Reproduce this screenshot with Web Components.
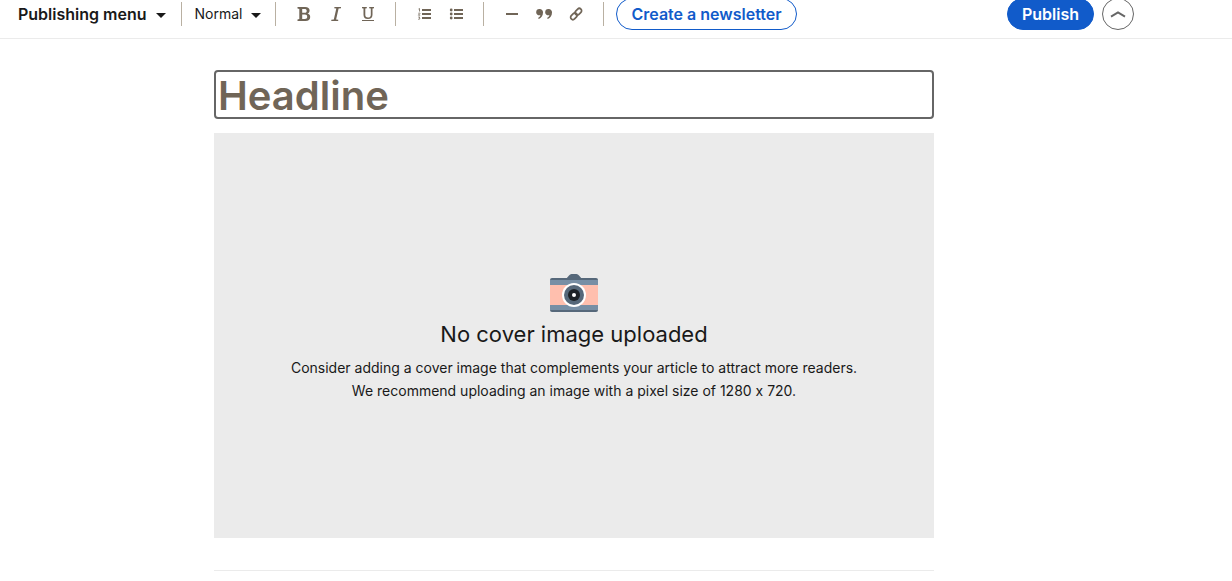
<!DOCTYPE html>
<html lang="en">
<head>
<meta charset="utf-8">
<title>Publish an article</title>
<style>
  body { margin: 0; background: #fff; color: #191919; font: 14px/20px Inter, "Liberation Sans", sans-serif; font-feature-settings: "calt" 0; }
</style>
</head>
<body>
<article-editor></article-editor>

<template id="tool-button">
  <style>
    :host { display: block; }
    button { display: grid; place-items: center; width: 32px; height: 32px; padding: 0; border: 0; background: none; color: #706557; }
    svg { display: block; width: 16px; height: 16px; }
  </style>
  <button type="button"></button>
</template>

<template id="menu-button">
  <style>
    :host { display: block; }
    button { display: flex; align-items: center; gap: 8px; padding: 0; border: 0; background: none; color: #191919; font: 14px/20px Inter, "Liberation Sans", sans-serif; white-space: nowrap; }
    :host([strong]) button { font-size: 16px; font-weight: 600; }
    svg { display: block; width: 12px; height: 12px; padding-top: 2px; }
  </style>
  <button type="button" aria-haspopup="true"><slot></slot><svg viewBox="0 0 12 12" aria-hidden="true"><path d="M1 4h10L6 9z" fill="currentColor"/></svg></button>
</template>

<template id="pill-button">
  <style>
    :host { display: block; }
    button { box-sizing: border-box; height: 32px; padding: 0 14px; border: 1px solid #115bca; border-radius: 16px; background: #fff; color: #115bca; font: 600 16px/20px Inter, "Liberation Sans", sans-serif; white-space: nowrap; }
    :host([primary]) button { background: #115bca; color: #fff; }
    :host([round]) button { display: grid; place-items: center; width: 32px; padding: 0; border-color: #666; color: #666; }
  </style>
  <button type="button"><slot></slot></button>
</template>

<template id="editor-toolbar">
  <style>
    :host { display: block; border-bottom: 1px solid #ebebeb; padding: 0 98px 10px 18px; }
    .bar { display: flex; align-items: center; height: 28px; }
    .rule { width: 1px; height: 24px; background: #b9b0a2; }
    .group { display: flex; padding: 0 11px 0 12px; }
    .menu { margin-right: 14px; }
    .style { margin: 0 13px; }
    .news { margin-left: 12px; }
    .end { display: flex; gap: 8px; margin-left: auto; }
  </style>
  <div class="bar" role="toolbar" aria-label="Formatting">
    <menu-button class="menu" strong>Publishing menu</menu-button>
    <span class="rule"></span>
    <menu-button class="style">Normal</menu-button>
    <span class="rule"></span>
    <div class="group">
      <tool-button icon="bold" label="Bold"></tool-button>
      <tool-button icon="italic" label="Italic"></tool-button>
      <tool-button icon="underline" label="Underline"></tool-button>
    </div>
    <span class="rule"></span>
    <div class="group">
      <tool-button icon="ordered" label="Ordered list"></tool-button>
      <tool-button icon="bullets" label="Unordered list"></tool-button>
    </div>
    <span class="rule"></span>
    <div class="group">
      <tool-button icon="divider" label="Divider"></tool-button>
      <tool-button icon="quote" label="Quote"></tool-button>
      <tool-button icon="link" label="Link"></tool-button>
    </div>
    <span class="rule"></span>
    <pill-button class="news">Create a newsletter</pill-button>
    <div class="end">
      <pill-button primary>Publish</pill-button>
      <pill-button round label="Collapse toolbar"><svg width="16" height="16" viewBox="0 0 16 16" aria-hidden="true"><path d="M1 10.600 8 6.400l7 4.200" fill="none" stroke="currentColor" stroke-width="2"/></svg></pill-button>
    </div>
  </div>
</template>

<template id="cover-placeholder">
  <style>
    :host { display: flex; flex-direction: column; align-items: center; justify-content: center; box-sizing: border-box; aspect-ratio: 16 / 9; padding-top: 3px; background: #ebebeb; text-align: center; }
    svg { display: block; width: 48px; height: 40px; }
    h2 { margin: 7px 0 8px; font-size: 22px; line-height: 28px; font-weight: 400; }
    p { margin: 0; font-size: 14px; line-height: 23px; }
  </style>
  <svg viewBox="0 0 48 40" aria-hidden="true">
    <path d="M16 6l3-3.500Q20 1 21.500 1h5Q28 1 29 2.500L32 6z" fill="#56687a"/>
    <path d="M0 7q0-2 2-2h44q2 0 2 2v30q0 2-2 2H2q-2 0-2-2z" fill="#56687a"/>
    <path d="M0 7h48v5H0zM0 32h48v5H0z" fill="#788fa5"/>
    <path d="M0 12h48v20H0z" fill="#ffbfae"/>
    <circle cx="24" cy="22" r="12" fill="#fff"/>
    <circle cx="24" cy="22" r="10" fill="#56687a"/>
    <circle cx="24" cy="22" r="6" fill="#1d2226"/>
    <circle cx="24" cy="22" r="2" fill="#fff"/>
  </svg>
  <h2>No cover image uploaded</h2>
  <p>Consider adding a cover image that complements your article to attract more readers.<br>We recommend uploading an image with a pixel size of 1280 x 720.</p>
</template>

<template id="article-editor">
  <style>
    :host { display: block; }
    main { box-sizing: border-box; width: 100%; padding: 31px 84px 0 0; }
    .column { max-width: 720px; margin: 0 auto; }
    input { display: block; box-sizing: border-box; width: 100%; height: 49px; margin: 0 0 14px; padding: 2px 2px 0; border: 2px solid #666; border-radius: 4px; outline: 0; background: #fff; color: #191919; font: 600 40px/43px Inter, "Liberation Sans", sans-serif; }
    input::placeholder { color: #706557; opacity: 1; }
    hr { margin: 32px 0 0; border: 0; border-top: 1px solid #ebebeb; }
  </style>
  <editor-toolbar></editor-toolbar>
  <main>
    <div class="column">
      <input type="text" placeholder="Headline" aria-label="Headline">
      <cover-placeholder></cover-placeholder>
      <hr>
    </div>
  </main>
</template>

<script>
const icons = {
  bold: '<path d="M1.500 1h7.700c2.800 0 4.400 1.300 4.400 3.500 0 1.600-.8 2.600-2.200 3.100 1.800.4 2.800 1.600 2.800 3.300 0 2.600-1.700 4.100-4.700 4.100h-8v-1.500l1.800-.4V2.900l-1.800-.4zm4.700 2v3.800h2.200c1.500 0 2.300-.6 2.300-1.900 0-1.300-.8-1.900-2.300-1.900zm0 5.600V13h2.700c1.500 0 2.300-.7 2.300-2.200s-.8-2.200-2.300-2.200z" fill="currentColor" fill-rule="evenodd"/>',
  italic: '<path d="M6.500 1H13v1.300l-2.400.3-2.500 10.800 2.100.3V15H3.300v-1.300l2.500-.3L8.300 2.600l-2.100-.3z" fill="currentColor"/>',
  underline: '<path d="M2 1h4.800v1.200l-1.500.3v6.300c0 1.800.8 2.700 2.700 2.700s2.800-.9 2.800-2.800V2.500l-1.600-.3V1H14v1.200l-1.500.3v6.200c0 2.800-1.500 4.300-4.600 4.300-3 0-4.400-1.500-4.400-4.300V2.500L2 2.200zM2 14h12v1H2z" fill="currentColor"/>',
  ordered: '<path d="M6 3h9v2H6zm0 4h9v2H6zm0 4h9v2H6z" fill="currentColor"/><path d="M2.500 3l1-.5v3M2.300 7.300q1.600-.8 1.600.2L2.400 9.200h1.800M2.300 11h1.500l-.7.9q1.100.1.700 1-.5.700-1.600.3" fill="none" stroke="currentColor" stroke-width=".8"/>',
  bullets: '<path d="M6 3h9v2H6zm0 4h9v2H6zm0 4h9v2H6z" fill="currentColor"/><circle cx="3.200" cy="4" r="1.400" fill="currentColor"/><circle cx="3.200" cy="8" r="1.400" fill="currentColor"/><circle cx="3.200" cy="12" r="1.400" fill="currentColor"/>',
  divider: '<path d="M2 7h12v2H2z" fill="currentColor"/>',
  quote: '<path d="M3.500 3A3.200 3.200 0 0 1 7 6.400c0 3.100-1.700 5.300-4.200 6.600l-.7-1c1.300-.8 2.200-1.800 2.300-3A2.900 2.900 0 0 1 .2 6.100 3.200 3.200 0 0 1 3.500 3zm9 0A3.200 3.200 0 0 1 16 6.400c0 3.100-1.700 5.300-4.200 6.600l-.7-1c1.300-.8 2.200-1.800 2.300-3a2.900 2.900 0 0 1-4.200-2.900A3.200 3.200 0 0 1 12.500 3z" fill="currentColor"/>',
  link: '<g fill="none" stroke="currentColor" stroke-width="1.700"><rect x="-3.700" y="-2.300" width="7.400" height="4.600" rx="2.300" transform="translate(10.300 5.700) rotate(-45)"/><rect x="-3.700" y="-2.300" width="7.400" height="4.600" rx="2.300" transform="translate(5.900 10.300) rotate(-45)"/></g>'
};

class TemplateElement extends HTMLElement {
  constructor() {
    super();
    this.attachShadow({ mode: "open" }).append(
      document.getElementById(this.localName).content.cloneNode(true));
  }
}

class ToolButton extends TemplateElement {
  connectedCallback() {
    const button = this.shadowRoot.querySelector("button");
    button.setAttribute("aria-label", this.getAttribute("label"));
    button.innerHTML = `<svg viewBox="0 0 16 16" aria-hidden="true">${icons[this.getAttribute("icon")]}</svg>`;
  }
}

class PillButton extends TemplateElement {
  connectedCallback() {
    const label = this.getAttribute("label");
    if (label) this.shadowRoot.querySelector("button").setAttribute("aria-label", label);
  }
}

customElements.define("tool-button", ToolButton);
customElements.define("menu-button", class extends TemplateElement {});
customElements.define("pill-button", PillButton);
customElements.define("editor-toolbar", class extends TemplateElement {});
customElements.define("cover-placeholder", class extends TemplateElement {});
customElements.define("article-editor", class extends TemplateElement {});
</script>
</body>
</html>
